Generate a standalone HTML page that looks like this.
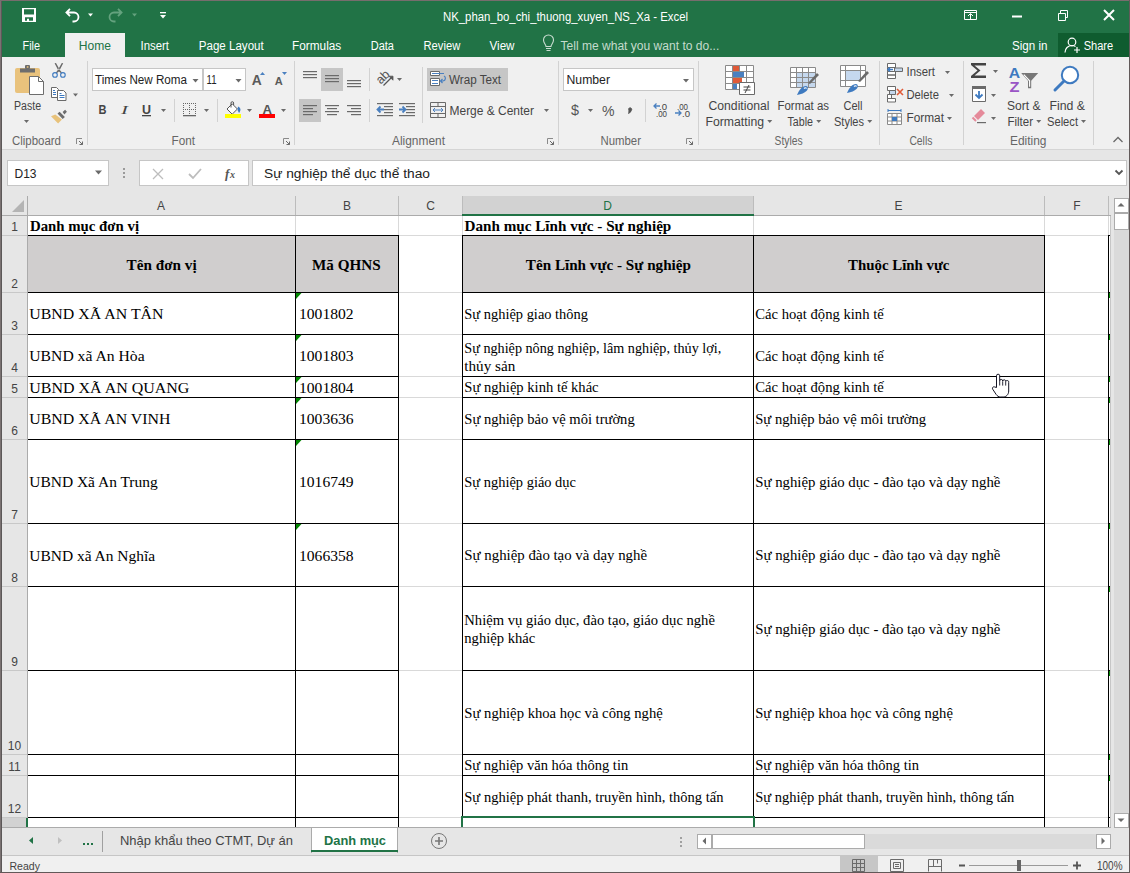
<!DOCTYPE html>
<html><head><meta charset="utf-8"><title>Excel</title>
<style>html,body{margin:0;padding:0;width:1130px;height:873px;overflow:hidden;background:#f0f0f0;font-family:"Liberation Sans",sans-serif}
svg{display:block;position:absolute;left:0;top:0}</style></head>
<body><svg width="1130" height="873" viewBox="0 0 1130 873" shape-rendering="auto">
<rect x="0" y="0" width="1130" height="873" fill="#f0f0f0" />
<rect x="2" y="1" width="1127" height="56" fill="#217346" />
<rect x="65" y="33" width="60" height="24" fill="#f0f0f0" />
<rect x="1058" y="33" width="71" height="24" fill="#0f5c2f" />
<rect x="2" y="57" width="1127" height="92" fill="#f0f0f0" />
<rect x="2" y="149" width="1127" height="1" fill="#d5d5d5" />
<rect x="2" y="150" width="1127" height="46" fill="#e6e6e6" />
<rect x="0" y="0" width="1" height="873" fill="#7a7272" />
<rect x="1" y="0" width="1" height="873" fill="#5c5858" />
<rect x="0" y="0" width="1130" height="1" fill="#776d6d" />
<rect x="1129" y="0" width="1" height="873" fill="#625a5a" />
<rect x="0" y="872" width="1130" height="1" fill="#625858" />
<path d="M22 8h14v14h-14z M24 9.2v5.4h10v-5.4z M25 17.2v3.6h2v-2h2v2h4v-3.6z" fill="#fff" fill-rule="evenodd"/>
<path d="M66.5 12.5h7.5a4.5 4.5 0 0 1 0 9h-1.5 M70 8.8l-3.6 3.7 3.6 3.7" stroke="#fff" stroke-width="1.8" fill="none"/>
<path d="M88.0 13.5h5l-2.5 3.0z" fill="#fff"/>
<path d="M121.5 12.5h-7.5a4.5 4.5 0 0 0 0 9h1.5 M118 8.8l3.6 3.7 -3.6 3.7" stroke="#64a27e" stroke-width="1.8" fill="none"/>
<path d="M132.0 13.5h5l-2.5 3.0z" fill="#64a27e"/>
<rect x="160" y="12" width="6" height="1.3" fill="#fff" />
<path d="M160.0 15h6l-3.0 3.5z" fill="#fff"/>
<text x="443" y="21" font-family="Liberation Sans" font-size="12" fill="#fff" font-weight="normal" textLength="245" lengthAdjust="spacingAndGlyphs" >NK_phan_bo_chi_thuong_xuyen_NS_Xa - Excel</text>
<path d="M964.5 10.5h12v9h-12z M964.5 12.5h12" stroke="#fff" stroke-width="1" fill="none"/>
<path d="M970.5 19v-5 M968 16l2.5-2.5 2.5 2.5" stroke="#fff" stroke-width="1" fill="none"/>
<rect x="1012" y="15.5" width="10" height="2" fill="#fff" />
<path d="M1058.5 13.5h7v7h-7z M1060.5 13.5v-3h7v7h-2" stroke="#fff" stroke-width="1" fill="none"/>
<path d="M1104 10l10 10 M1114 10l-10 10" stroke="#fff" stroke-width="2" fill="none"/>
<text x="22.5" y="50" font-family="Liberation Sans" font-size="12" fill="#fff" font-weight="normal" textLength="17.5" lengthAdjust="spacingAndGlyphs" >File</text>
<text x="140.5" y="50" font-family="Liberation Sans" font-size="12" fill="#fff" font-weight="normal" textLength="28.5" lengthAdjust="spacingAndGlyphs" >Insert</text>
<text x="198.75" y="50" font-family="Liberation Sans" font-size="12" fill="#fff" font-weight="normal" textLength="65" lengthAdjust="spacingAndGlyphs" >Page Layout</text>
<text x="292" y="50" font-family="Liberation Sans" font-size="12" fill="#fff" font-weight="normal" textLength="49.25" lengthAdjust="spacingAndGlyphs" >Formulas</text>
<text x="370.75" y="50" font-family="Liberation Sans" font-size="12" fill="#fff" font-weight="normal" textLength="23.25" lengthAdjust="spacingAndGlyphs" >Data</text>
<text x="423.5" y="50" font-family="Liberation Sans" font-size="12" fill="#fff" font-weight="normal" textLength="36.75" lengthAdjust="spacingAndGlyphs" >Review</text>
<text x="489.5" y="50" font-family="Liberation Sans" font-size="12" fill="#fff" font-weight="normal" textLength="25" lengthAdjust="spacingAndGlyphs" >View</text>
<text x="78.75" y="50" font-family="Liberation Sans" font-size="12" fill="#217346" font-weight="normal" textLength="32.25" lengthAdjust="spacingAndGlyphs" >Home</text>
<path d="M546 46.5c0-2-2.5-3.5-2.5-6.5a5 5 0 0 1 10 0c0 3-2.5 4.5-2.5 6.5z M546 48.5h5 M546.5 50.5h4" stroke="#c9ddd1" stroke-width="1.1" fill="none"/>
<text x="560.5" y="50" font-family="Liberation Sans" font-size="12" fill="#c5dccd" font-weight="normal" textLength="158.75" lengthAdjust="spacingAndGlyphs" >Tell me what you want to do...</text>
<text x="1012" y="50" font-family="Liberation Sans" font-size="12" fill="#fff" font-weight="normal" textLength="35.5" lengthAdjust="spacingAndGlyphs" >Sign in</text>
<path d="M1072 45.5a4 4 0 1 0 0.01 0z" fill="none"/>
<circle cx="1072" cy="42" r="3.8" stroke="#fff" stroke-width="1.2" fill="none"/><path d="M1065 52.5c0-4 3-7 7-7 1.5 0 2.5 0.3 3.5 1" stroke="#fff" stroke-width="1.2" fill="none"/><path d="M1077 47v6 M1074 50h6" stroke="#fff" stroke-width="1.2"/>
<text x="1083.7" y="50" font-family="Liberation Sans" font-size="12" fill="#fff" font-weight="normal" textLength="29.5" lengthAdjust="spacingAndGlyphs" >Share</text>
<rect x="87" y="61" width="1" height="84" fill="#d2d2d2" />
<rect x="294" y="61" width="1" height="84" fill="#d2d2d2" />
<rect x="558" y="61" width="1" height="84" fill="#d2d2d2" />
<rect x="698" y="61" width="1" height="84" fill="#d2d2d2" />
<rect x="879" y="61" width="1" height="84" fill="#d2d2d2" />
<rect x="963" y="61" width="1" height="84" fill="#d2d2d2" />
<rect x="1093" y="61" width="1" height="84" fill="#d2d2d2" />
<path d="M76.5 144v-5.5h5.5" stroke="#8a8a8a" stroke-width="1" fill="none"/><path d="M79 141l3.5 3.5 M82.5 141.5v3h-3" stroke="#6a6a6a" stroke-width="1" fill="none"/>
<path d="M283.5 144v-5.5h5.5" stroke="#8a8a8a" stroke-width="1" fill="none"/><path d="M286 141l3.5 3.5 M289.5 141.5v3h-3" stroke="#6a6a6a" stroke-width="1" fill="none"/>
<path d="M547.5 144v-5.5h5.5" stroke="#8a8a8a" stroke-width="1" fill="none"/><path d="M550 141l3.5 3.5 M553.5 141.5v3h-3" stroke="#6a6a6a" stroke-width="1" fill="none"/>
<path d="M686.5 144v-5.5h5.5" stroke="#8a8a8a" stroke-width="1" fill="none"/><path d="M689 141l3.5 3.5 M692.5 141.5v3h-3" stroke="#6a6a6a" stroke-width="1" fill="none"/>
<text x="12" y="145" font-family="Liberation Sans" font-size="12" fill="#666666" font-weight="normal" textLength="49" lengthAdjust="spacingAndGlyphs" >Clipboard</text>
<text x="171.5" y="145" font-family="Liberation Sans" font-size="12" fill="#666666" font-weight="normal" textLength="23.5" lengthAdjust="spacingAndGlyphs" >Font</text>
<text x="392" y="145" font-family="Liberation Sans" font-size="12" fill="#666666" font-weight="normal" textLength="53" lengthAdjust="spacingAndGlyphs" >Alignment</text>
<text x="600.5" y="145" font-family="Liberation Sans" font-size="12" fill="#666666" font-weight="normal" textLength="40.5" lengthAdjust="spacingAndGlyphs" >Number</text>
<text x="774.6" y="145" font-family="Liberation Sans" font-size="12" fill="#666666" font-weight="normal" textLength="28" lengthAdjust="spacingAndGlyphs" >Styles</text>
<text x="909.4" y="145" font-family="Liberation Sans" font-size="12" fill="#666666" font-weight="normal" textLength="23" lengthAdjust="spacingAndGlyphs" >Cells</text>
<text x="1010" y="145" font-family="Liberation Sans" font-size="12" fill="#666666" font-weight="normal" textLength="36.5" lengthAdjust="spacingAndGlyphs" >Editing</text>
<path d="M1113.5 142l4.5-4.5 4.5 4.5" stroke="#6a6a6a" stroke-width="1.3" fill="none"/>
<rect x="15" y="68" width="25" height="25" rx="2" fill="#e9c27c"/>
<rect x="20" y="68.5" width="15" height="4" fill="#6d6d6d"/><rect x="25" y="65" width="5" height="4" rx="1" fill="#6d6d6d"/><rect x="26.8" y="66.2" width="1.6" height="1.6" fill="#e9c27c"/>
<path d="M29.5 76.5h9l5 5v13h-14z" fill="#fff" stroke="#6d6d6d" stroke-width="1"/><path d="M38.5 76.5v5h5" fill="none" stroke="#6d6d6d" stroke-width="1"/>
<text x="14" y="110" font-family="Liberation Sans" font-size="12" fill="#444444" font-weight="normal" textLength="27" lengthAdjust="spacingAndGlyphs" >Paste</text>
<path d="M24.0 120h5l-2.5 3.0z" fill="#6a6a6a"/>
<path d="M54.6 63.2L56 63l4.2 7.5-1 1.8z M63.2 63.2L61.8 63l-4.2 7.5 1 1.8z" fill="#6a6a6a"/><path d="M58.9 70l-2.6 3 M58.9 70l2.6 3" stroke="#6a6a6a" stroke-width="1.2"/><circle cx="55" cy="74.9" r="2.3" stroke="#3e7ac0" stroke-width="1.1" fill="none"/><circle cx="62.9" cy="74.9" r="2.3" stroke="#3e7ac0" stroke-width="1.1" fill="none"/>
<path d="M51.5 87.5h5l2 2v8h-7z" fill="#fff" stroke="#6a6a6a"/><path d="M53 90.5h2 M53 92.5h3 M53 94.5h3" stroke="#3e7ac0" stroke-width="1"/><path d="M57.5 90.5h6l2.5 2.5v7.5h-8.5z" fill="#fff" stroke="#6a6a6a"/><path d="M59.5 93.5h2 M59.5 95.5h5 M59.5 97.5h5" stroke="#3e7ac0" stroke-width="1"/>
<path d="M73.0 93.5h5l-2.5 3.0z" fill="#6a6a6a"/>
<path d="M62.6 112L65.1 109.8L66.9 111.8L64.4 114.6Z M57.5 113.6L59.6 111.8L64.9 117L62.7 119Z" fill="#6d6d6d"/><path d="M51 116.3L55.3 114.6L61.9 119.6L58.1 123.6Z" fill="#e8c27a"/>
<rect x="92" y="68" width="111" height="23" fill="#fff" />
<rect x="92" y="68" width="111" height="1" fill="#c6c6c6" />
<rect x="92" y="90" width="111" height="1" fill="#c6c6c6" />
<rect x="92" y="68" width="1" height="23" fill="#c6c6c6" />
<rect x="202" y="68" width="1" height="23" fill="#c6c6c6" />
<rect x="203" y="68" width="43" height="23" fill="#fff" />
<rect x="203" y="68" width="43" height="1" fill="#c6c6c6" />
<rect x="203" y="90" width="43" height="1" fill="#c6c6c6" />
<rect x="203" y="68" width="1" height="23" fill="#c6c6c6" />
<rect x="245" y="68" width="1" height="23" fill="#c6c6c6" />
<text x="95" y="84" font-family="Liberation Sans" font-size="12" fill="#222" font-weight="normal" textLength="92" lengthAdjust="spacingAndGlyphs" >Times New Roma</text>
<path d="M192.5 79h6l-3.0 3.5z" fill="#6a6a6a"/>
<text x="206.5" y="84" font-family="Liberation Sans" font-size="12" fill="#222" font-weight="normal" textLength="10" lengthAdjust="spacingAndGlyphs" >11</text>
<path d="M235.5 79h6l-3.0 3.5z" fill="#6a6a6a"/>
<text x="251.8" y="85" font-family="Liberation Sans" font-size="14" fill="#5a5a5a" font-weight="bold" textLength="10" lengthAdjust="spacingAndGlyphs" >A</text>
<path d="M260 75l2.5-3 2.5 3z" fill="#4a80c0"/>
<text x="274.8" y="85" font-family="Liberation Sans" font-size="11" fill="#5a5a5a" font-weight="bold" textLength="8" lengthAdjust="spacingAndGlyphs" >A</text>
<path d="M282 72h5l-2.5 3z" fill="#4a80c0"/>
<text x="98.5" y="114" font-family="Liberation Sans" font-size="12.5" fill="#444" font-weight="bold" textLength="8" lengthAdjust="spacingAndGlyphs" >B</text>
<text x="121" y="114" font-family="Liberation Serif" font-size="13" fill="#444" font-weight="normal" textLength="7" lengthAdjust="spacingAndGlyphs" font-style="italic">I</text>
<text x="142" y="114" font-family="Liberation Sans" font-size="12.5" fill="#444" font-weight="bold" textLength="9" lengthAdjust="spacingAndGlyphs" >U</text>
<rect x="142" y="115" width="9" height="1.3" fill="#444" />
<path d="M161.0 109h5l-2.5 3.0z" fill="#6a6a6a"/>
<rect x="174" y="99" width="1" height="23" fill="#d2d2d2" />
<rect x="183" y="103" width="1" height="1" fill="#666" />
<rect x="185" y="103" width="1" height="1" fill="#666" />
<rect x="187" y="103" width="1" height="1" fill="#666" />
<rect x="189" y="103" width="1" height="1" fill="#666" />
<rect x="191" y="103" width="1" height="1" fill="#666" />
<rect x="193" y="103" width="1" height="1" fill="#666" />
<rect x="195" y="103" width="1" height="1" fill="#666" />
<rect x="183" y="109" width="1" height="1" fill="#666" />
<rect x="185" y="109" width="1" height="1" fill="#666" />
<rect x="187" y="109" width="1" height="1" fill="#666" />
<rect x="189" y="109" width="1" height="1" fill="#666" />
<rect x="191" y="109" width="1" height="1" fill="#666" />
<rect x="193" y="109" width="1" height="1" fill="#666" />
<rect x="195" y="109" width="1" height="1" fill="#666" />
<rect x="183" y="105" width="1" height="1" fill="#666" />
<rect x="189" y="105" width="1" height="1" fill="#666" />
<rect x="195" y="105" width="1" height="1" fill="#666" />
<rect x="183" y="107" width="1" height="1" fill="#666" />
<rect x="189" y="107" width="1" height="1" fill="#666" />
<rect x="195" y="107" width="1" height="1" fill="#666" />
<rect x="183" y="111" width="1" height="1" fill="#666" />
<rect x="189" y="111" width="1" height="1" fill="#666" />
<rect x="195" y="111" width="1" height="1" fill="#666" />
<rect x="183" y="113" width="1" height="1" fill="#666" />
<rect x="189" y="113" width="1" height="1" fill="#666" />
<rect x="195" y="113" width="1" height="1" fill="#666" />
<rect x="183" y="115" width="13" height="1.3" fill="#666" />
<path d="M204.0 109h5l-2.5 3.0z" fill="#6a6a6a"/>
<rect x="217" y="99" width="1" height="23" fill="#d2d2d2" />
<path d="M227 109l5.2-5.2 5.2 5.2-5.2 5.2z" fill="#fff" stroke="#555" stroke-width="1"/><path d="M231 107.5v-4.5a1.3 1.3 0 0 1 2.6 0v2" stroke="#555" stroke-width="1" fill="none"/><path d="M238 106.5c2.5 1 3.5 3.5 1 6.5l-1.5-3z" fill="#3e7ac0"/>
<rect x="225" y="114" width="16" height="4" fill="#ffff00" />
<path d="M247.0 109h5l-2.5 3.0z" fill="#6a6a6a"/>
<text x="262.5" y="113.5" font-family="Liberation Sans" font-size="12.5" fill="#555" font-weight="bold" textLength="9.5" lengthAdjust="spacingAndGlyphs" >A</text>
<rect x="259" y="114" width="16" height="4" fill="#ff0000" />
<path d="M281.0 109h5l-2.5 3.0z" fill="#6a6a6a"/>
<rect x="321" y="68" width="22" height="23" fill="#c6c6c6" />
<rect x="299" y="99" width="22" height="23" fill="#c6c6c6" />
<rect x="303" y="71" width="14" height="1.2" fill="#6a6a6a" />
<rect x="303" y="74" width="14" height="1.2" fill="#6a6a6a" />
<rect x="303" y="77" width="14" height="1.2" fill="#6a6a6a" />
<rect x="325" y="75" width="14" height="1.2" fill="#6a6a6a" />
<rect x="325" y="78" width="14" height="1.2" fill="#6a6a6a" />
<rect x="325" y="81" width="14" height="1.2" fill="#6a6a6a" />
<rect x="347" y="80" width="14" height="1.2" fill="#6a6a6a" />
<rect x="347" y="83" width="14" height="1.2" fill="#6a6a6a" />
<rect x="347" y="86" width="14" height="1.2" fill="#6a6a6a" />
<rect x="303" y="105" width="14" height="1.2" fill="#6a6a6a" />
<rect x="325" y="105" width="14" height="1.2" fill="#6a6a6a" />
<rect x="347" y="105" width="14" height="1.2" fill="#6a6a6a" />
<rect x="303" y="108" width="10" height="1.2" fill="#6a6a6a" />
<rect x="327" y="108" width="10" height="1.2" fill="#6a6a6a" />
<rect x="351" y="108" width="10" height="1.2" fill="#6a6a6a" />
<rect x="303" y="111" width="14" height="1.2" fill="#6a6a6a" />
<rect x="325" y="111" width="14" height="1.2" fill="#6a6a6a" />
<rect x="347" y="111" width="14" height="1.2" fill="#6a6a6a" />
<rect x="303" y="114" width="10" height="1.2" fill="#6a6a6a" />
<rect x="327" y="114" width="10" height="1.2" fill="#6a6a6a" />
<rect x="351" y="114" width="10" height="1.2" fill="#6a6a6a" />
<rect x="369" y="68" width="1" height="23" fill="#d2d2d2" />
<rect x="369" y="99" width="1" height="23" fill="#d2d2d2" />
<text x="0" y="0" font-family="Liberation Sans" font-size="12.5" fill="#555" transform="translate(380.7 84.8) rotate(-45)">ab</text>
<path d="M383.5 85.5l7.5-7.5" stroke="#555" stroke-width="1.2" fill="none"/><path d="M389 76.2h4v4z" fill="#555" stroke="#555" stroke-width="0.8"/>
<path d="M397.0 78h5l-2.5 3.0z" fill="#6a6a6a"/>
<rect x="377" y="103" width="16" height="1.2" fill="#6a6a6a" />
<rect x="377" y="115" width="16" height="1.2" fill="#6a6a6a" />
<rect x="384" y="106" width="9" height="1.2" fill="#6a6a6a" />
<rect x="384" y="109" width="9" height="1.2" fill="#6a6a6a" />
<rect x="384" y="112" width="9" height="1.2" fill="#6a6a6a" />
<path d="M384 109.5h-6 M380.5 106.5l-3 3 3 3" stroke="#4a80c0" stroke-width="1.8" fill="none"/>
<rect x="399" y="103" width="16" height="1.2" fill="#6a6a6a" />
<rect x="399" y="115" width="16" height="1.2" fill="#6a6a6a" />
<rect x="406" y="106" width="9" height="1.2" fill="#6a6a6a" />
<rect x="406" y="109" width="9" height="1.2" fill="#6a6a6a" />
<rect x="406" y="112" width="9" height="1.2" fill="#6a6a6a" />
<path d="M399 109.5h6 M402.5 106.5l3 3 -3 3" stroke="#4a80c0" stroke-width="1.8" fill="none"/>
<rect x="422" y="67" width="1" height="56" fill="#d2d2d2" />
<rect x="427" y="68" width="81" height="23" fill="#c6c6c6" />
<path d="M430.5 71.5h9v4h-9z M430.5 78.5h9v7h-9z" fill="#fff" stroke="#6a6a6a"/><path d="M432 73.5h12 M432 80.5h6 M432 83.5h6" stroke="#4a80c0" stroke-width="1"/><path d="M444 76c2 1 2 4.5 -1 5h-2 M442.5 79l-2 2 2 2" stroke="#4a80c0" stroke-width="1.2" fill="none"/>
<text x="449" y="84" font-family="Liberation Sans" font-size="12" fill="#444444" font-weight="normal" textLength="52" lengthAdjust="spacingAndGlyphs" >Wrap Text</text>
<path d="M430.5 102.5h15v15h-15z M430.5 106.5h15 M430.5 113.5h15 M438 102.5v4 M438 113.5v4" fill="none" stroke="#6a6a6a"/><path d="M433 110h10 M435 108l-2 2 2 2 M441 108l2 2-2 2" stroke="#4a80c0" stroke-width="1" fill="none"/>
<text x="449.5" y="115" font-family="Liberation Sans" font-size="12" fill="#444444" font-weight="normal" textLength="84.5" lengthAdjust="spacingAndGlyphs" >Merge &amp; Center</text>
<path d="M544.0 109h5l-2.5 3.0z" fill="#6a6a6a"/>
<rect x="563" y="68" width="131" height="23" fill="#fff" />
<rect x="563" y="68" width="131" height="1" fill="#c6c6c6" />
<rect x="563" y="90" width="131" height="1" fill="#c6c6c6" />
<rect x="563" y="68" width="1" height="23" fill="#c6c6c6" />
<rect x="693" y="68" width="1" height="23" fill="#c6c6c6" />
<text x="566.5" y="84" font-family="Liberation Sans" font-size="12" fill="#222" font-weight="normal" textLength="43.5" lengthAdjust="spacingAndGlyphs" >Number</text>
<path d="M683.0 79h6l-3.0 3.5z" fill="#6a6a6a"/>
<text x="571" y="115" font-family="Liberation Sans" font-size="15" fill="#555" font-weight="normal" textLength="8" lengthAdjust="spacingAndGlyphs" >$</text>
<path d="M588.0 109h5l-2.5 3.0z" fill="#6a6a6a"/>
<text x="602" y="116" font-family="Liberation Sans" font-size="14" fill="#555" font-weight="normal" textLength="12.5" lengthAdjust="spacingAndGlyphs" >%</text>
<path d="M628.5 109.5a1.6 1.6 0 1 1 2.8 1c-0.5 1.5-1.5 2.5-3 3" fill="#555" stroke="#555" stroke-width="1"/>
<rect x="645" y="99" width="1" height="23" fill="#d2d2d2" />
<text x="659" y="109.5" font-family="Liberation Sans" font-size="9" fill="#444" font-weight="normal" textLength="8" lengthAdjust="spacingAndGlyphs" >.0</text>
<text x="656" y="116.5" font-family="Liberation Sans" font-size="9" fill="#444" font-weight="normal" textLength="11" lengthAdjust="spacingAndGlyphs" >.00</text>
<path d="M660 106h-6 M656.5 103.5l-2.5 2.5 2.5 2.5" stroke="#4a80c0" stroke-width="1.3" fill="none"/>
<text x="677" y="109.5" font-family="Liberation Sans" font-size="9" fill="#444" font-weight="normal" textLength="11" lengthAdjust="spacingAndGlyphs" >.00</text>
<text x="682" y="116.5" font-family="Liberation Sans" font-size="9" fill="#444" font-weight="normal" textLength="8" lengthAdjust="spacingAndGlyphs" >.0</text>
<path d="M675 113h6 M678.5 110.5l2.5 2.5-2.5 2.5" stroke="#4a80c0" stroke-width="1.3" fill="none"/>
<path d="M725.5 65.5h28v24h-28z M732.5 65.5v24 M739.5 65.5v24 M746.5 65.5v24 M725.5 71.5h28 M725.5 77.5h28 M725.5 83.5h28" stroke="#8a8a8a" stroke-width="1" fill="#fff"/>
<rect x="733" y="66" width="6" height="5" fill="#e05a38" />
<rect x="733" y="72" width="11" height="5" fill="#4a80c0" />
<rect x="733" y="78" width="9" height="5" fill="#e05a38" />
<rect x="733" y="84" width="4" height="5" fill="#4a80c0" />
<path d="M739.5 82.5h15v12h-15z" fill="#fff" stroke="#6a6a6a"/>
<path d="M743.5 87h7 M743.5 90h7 M745 93l4-8" stroke="#444" stroke-width="1"/>
<text x="708.5" y="110" font-family="Liberation Sans" font-size="12" fill="#444444" font-weight="normal" textLength="61" lengthAdjust="spacingAndGlyphs" >Conditional</text>
<text x="705.5" y="126" font-family="Liberation Sans" font-size="12" fill="#444444" font-weight="normal" textLength="58.5" lengthAdjust="spacingAndGlyphs" >Formatting</text>
<path d="M767.25 120h5l-2.5 3.0z" fill="#6a6a6a"/>
<path d="M790.5 67.5h25v20h-25z" fill="#fff" stroke="#8a8a8a"/>
<rect x="797" y="73" width="18" height="14" fill="#c5d8ee" />
<path d="M796.5 67.5v20 M802.5 67.5v20 M808.5 67.5v20 M790.5 72.5h25 M790.5 77.5h25 M790.5 82.5h25" stroke="#8a8a8a" stroke-width="1"/>
<path d="M808 83l9-10 2 2-9 9z" fill="#6a6a6a"/><path d="M797 95c2-5 5-9 9-9c2 0 2.5 3 0.5 5c-2 2-5 3-9.5 4z" fill="#3e7ac0"/><path d="M804 88.5c1-1 2-1 2.5 0" stroke="#fff" stroke-width="1.2" fill="none"/>
<text x="777.5" y="110" font-family="Liberation Sans" font-size="12" fill="#444444" font-weight="normal" textLength="51.5" lengthAdjust="spacingAndGlyphs" >Format as</text>
<text x="787.5" y="126" font-family="Liberation Sans" font-size="12" fill="#444444" font-weight="normal" textLength="25.5" lengthAdjust="spacingAndGlyphs" >Table</text>
<path d="M816.25 120h5l-2.5 3.0z" fill="#6a6a6a"/>
<path d="M840.5 65.5h25v21h-25z" fill="#fff" stroke="#8a8a8a"/>
<rect x="846" y="71" width="14" height="9" fill="#c5d8ee" />
<path d="M845.5 65.5v21 M860.5 65.5v15 M840.5 70.5h25 M840.5 80.5h20" stroke="#8a8a8a" stroke-width="1"/>
<path d="M858 81l9-10 2 2-9 9z" fill="#6a6a6a"/><path d="M847 93c2-5 5-9 9-9c2 0 2.5 3 0.5 5c-2 2-5 3-9.5 4z" fill="#3e7ac0"/><path d="M854 86.5c1-1 2-1 2.5 0" stroke="#fff" stroke-width="1.2" fill="none"/>
<text x="843.5" y="110" font-family="Liberation Sans" font-size="12" fill="#444444" font-weight="normal" textLength="19" lengthAdjust="spacingAndGlyphs" >Cell</text>
<text x="834" y="126" font-family="Liberation Sans" font-size="12" fill="#444444" font-weight="normal" textLength="30" lengthAdjust="spacingAndGlyphs" >Styles</text>
<path d="M867.25 120h5l-2.5 3.0z" fill="#6a6a6a"/>
<path d="M887.5 63.5h8v4h-8z M887.5 67.5h8v4h-8z M887.5 71.5h8v3.5h-8z M887.5 75h8v3.5h-8z" fill="#fff" stroke="#6a6a6a"/>
<path d="M894.5 68h8v3.5h-8z" fill="#c5d8ee" stroke="#6a6a6a"/>
<path d="M893 69.5h-5 M890 67.5l-2 2 2 2" stroke="#3e7ac0" stroke-width="1.5" fill="none"/>
<text x="906.5" y="76" font-family="Liberation Sans" font-size="12" fill="#444444" font-weight="normal" textLength="28.5" lengthAdjust="spacingAndGlyphs" >Insert</text>
<path d="M945.0 71h5l-2.5 3.0z" fill="#6a6a6a"/>
<path d="M887.5 86.5h8v4h-8z M887.5 94.5h4v4h-4z M887.5 98.5h8v3.5h-8z" fill="#fff" stroke="#6a6a6a"/><path d="M889.5 90.5h6v4h-6z" fill="#c5d8ee" stroke="#6a6a6a"/>
<path d="M897 89l6 6 M903 89l-6 6" stroke="#e05a38" stroke-width="1.6"/>
<text x="906.5" y="99" font-family="Liberation Sans" font-size="12" fill="#444444" font-weight="normal" textLength="32.5" lengthAdjust="spacingAndGlyphs" >Delete</text>
<path d="M949.0 94h5l-2.5 3.0z" fill="#6a6a6a"/>
<path d="M887.5 113.5h14v11h-14z M887.5 117h14 M887.5 121h14 M892 113.5v11 M897 113.5v11" fill="#fff" stroke="#8a8a8a"/>
<rect x="892" y="117" width="5" height="4" fill="#3e7ac0" />
<path d="M888 110.5h13 M888 109v3 M901 109v3" stroke="#3e7ac0" stroke-width="1"/>
<text x="906.5" y="122" font-family="Liberation Sans" font-size="12" fill="#444444" font-weight="normal" textLength="37.5" lengthAdjust="spacingAndGlyphs" >Format</text>
<path d="M947.0 117h5l-2.5 3.0z" fill="#6a6a6a"/>
<path d="M971 63h15v2.5h-11.5l6 5-6 5h11.5v2.5h-15v-2l6.5-5.5-6.5-5.5z" fill="#444"/>
<path d="M993.0 70h5l-2.5 3.0z" fill="#6a6a6a"/>
<path d="M972.5 86.5h13v15h-13z" fill="#fff" stroke="#6a6a6a"/>
<rect x="972" y="86" width="14" height="3" fill="#6a6a6a" />
<path d="M979 91v7 M975.5 94.5l3.5 3.5 3.5-3.5" stroke="#3e7ac0" stroke-width="1.8" fill="none"/>
<path d="M991.0 94h5l-2.5 3.0z" fill="#6a6a6a"/>
<path d="M974 116l7-7 4 4-7 7z" fill="#e58a9a"/><path d="M972.5 117.5l3.5 3.5" stroke="#e58a9a" stroke-width="2"/>
<rect x="977" y="122" width="9" height="1.2" fill="#6a6a6a" />
<path d="M991.0 117h5l-2.5 3.0z" fill="#6a6a6a"/>
<text x="1008.8" y="77.8" font-family="Liberation Sans" font-size="15.5" fill="#3e7ac0" font-weight="bold" textLength="11.4" lengthAdjust="spacingAndGlyphs" >A</text>
<text x="1009.6" y="92" font-family="Liberation Sans" font-size="15.5" fill="#9a55c5" font-weight="bold" textLength="10" lengthAdjust="spacingAndGlyphs" >Z</text>
<path d="M1021.2 73H1038.2L1031.2 80.8V88.2H1028V80.8Z" fill="#777"/><path d="M1023.8 74.6L1029.6 80.8V86.8" stroke="#fff" stroke-width="1.1" fill="none"/>
<text x="1007" y="110" font-family="Liberation Sans" font-size="12" fill="#444444" font-weight="normal" textLength="33.5" lengthAdjust="spacingAndGlyphs" >Sort &amp;</text>
<text x="1007.5" y="126" font-family="Liberation Sans" font-size="12" fill="#444444" font-weight="normal" textLength="25.5" lengthAdjust="spacingAndGlyphs" >Filter</text>
<path d="M1036.25 120h5l-2.5 3.0z" fill="#6a6a6a"/>
<circle cx="1070" cy="75" r="8.2" stroke="#3e7ac0" stroke-width="2" fill="#fff"/><path d="M1064 81l-9 9" stroke="#3e7ac0" stroke-width="3" stroke-linecap="round"/>
<text x="1049.5" y="110" font-family="Liberation Sans" font-size="12" fill="#444444" font-weight="normal" textLength="35.5" lengthAdjust="spacingAndGlyphs" >Find &amp;</text>
<text x="1047" y="126" font-family="Liberation Sans" font-size="12" fill="#444444" font-weight="normal" textLength="31" lengthAdjust="spacingAndGlyphs" >Select</text>
<path d="M1081.0 120h5l-2.5 3.0z" fill="#6a6a6a"/>
<rect x="7" y="160" width="102" height="26" fill="#fff" />
<rect x="7" y="160" width="102" height="1" fill="#c6c6c6" />
<rect x="7" y="185" width="102" height="1" fill="#c6c6c6" />
<rect x="7" y="160" width="1" height="26" fill="#c6c6c6" />
<rect x="108" y="160" width="1" height="26" fill="#c6c6c6" />
<text x="14.5" y="178" font-family="Liberation Sans" font-size="12" fill="#222" font-weight="normal" textLength="22" lengthAdjust="spacingAndGlyphs" >D13</text>
<path d="M95.0 170.5h7l-3.5 4.0z" fill="#6a6a6a"/>
<rect x="123" y="168" width="2" height="2" fill="#9a9a9a" />
<rect x="123" y="172" width="2" height="2" fill="#9a9a9a" />
<rect x="123" y="176" width="2" height="2" fill="#9a9a9a" />
<rect x="139" y="160" width="110" height="26" fill="#fff" />
<rect x="139" y="160" width="110" height="1" fill="#c6c6c6" />
<rect x="139" y="185" width="110" height="1" fill="#c6c6c6" />
<rect x="139" y="160" width="1" height="26" fill="#c6c6c6" />
<rect x="248" y="160" width="1" height="26" fill="#c6c6c6" />
<path d="M153 169l10 10 M163 169l-10 10" stroke="#bdbdbd" stroke-width="1.3"/>
<path d="M189 174l4 4 8-9" stroke="#bdbdbd" stroke-width="1.8" fill="none"/>
<text x="225" y="178" font-family="Liberation Serif" font-size="13" fill="#555" font-weight="bold" font-style="italic">f</text>
<text x="230" y="178" font-family="Liberation Serif" font-size="10" fill="#555" font-weight="bold" font-style="italic">x</text>
<rect x="252" y="160" width="875" height="26" fill="#fff" />
<rect x="252" y="160" width="875" height="1" fill="#c6c6c6" />
<rect x="252" y="185" width="875" height="1" fill="#c6c6c6" />
<rect x="252" y="160" width="1" height="26" fill="#c6c6c6" />
<rect x="1126" y="160" width="1" height="26" fill="#c6c6c6" />
<text x="264" y="178" font-family="Liberation Sans" font-size="12" fill="#222" font-weight="normal" textLength="166" lengthAdjust="spacingAndGlyphs" >Sự nghiệp thể dục thể thao</text>
<path d="M1115.5 170.5l3.5 3.5 3.5-3.5" stroke="#555" stroke-width="1.8" fill="none"/>
<rect x="2" y="196" width="1109" height="19" fill="#e6e6e6" />
<path d="M24 200v12h-12z" fill="#b4b4b4"/>
<rect x="463" y="196" width="290" height="18" fill="#d2d2d2" />
<rect x="27" y="196" width="1" height="19" fill="#bcbcbc" />
<rect x="295" y="196" width="1" height="19" fill="#bcbcbc" />
<rect x="398" y="196" width="1" height="19" fill="#bcbcbc" />
<rect x="462" y="196" width="1" height="19" fill="#bcbcbc" />
<rect x="753" y="196" width="1" height="19" fill="#bcbcbc" />
<rect x="1044" y="196" width="1" height="19" fill="#bcbcbc" />
<rect x="1108" y="196" width="1" height="19" fill="#bcbcbc" />
<rect x="2" y="215" width="1109" height="1" fill="#ababab" />
<rect x="462" y="214" width="292" height="2" fill="#217346" />
<text x="161" y="210" font-family="Liberation Sans" font-size="12" fill="#444" font-weight="normal" text-anchor="middle" >A</text>
<text x="347" y="210" font-family="Liberation Sans" font-size="12" fill="#444" font-weight="normal" text-anchor="middle" >B</text>
<text x="430.5" y="210" font-family="Liberation Sans" font-size="12" fill="#444" font-weight="normal" text-anchor="middle" >C</text>
<text x="607.5" y="210" font-family="Liberation Sans" font-size="12" fill="#217346" font-weight="normal" text-anchor="middle" >D</text>
<text x="898.5" y="210" font-family="Liberation Sans" font-size="12" fill="#444" font-weight="normal" text-anchor="middle" >E</text>
<text x="1077" y="210" font-family="Liberation Sans" font-size="12" fill="#444" font-weight="normal" text-anchor="middle" >F</text>
<rect x="2" y="216" width="25" height="611" fill="#e6e6e6" />
<rect x="27" y="196" width="1" height="632" fill="#ababab" />
<rect x="2" y="235" width="25" height="1" fill="#c8c8c8" />
<rect x="2" y="292" width="25" height="1" fill="#c8c8c8" />
<rect x="2" y="334" width="25" height="1" fill="#c8c8c8" />
<rect x="2" y="376" width="25" height="1" fill="#c8c8c8" />
<rect x="2" y="397" width="25" height="1" fill="#c8c8c8" />
<rect x="2" y="439" width="25" height="1" fill="#c8c8c8" />
<rect x="2" y="523" width="25" height="1" fill="#c8c8c8" />
<rect x="2" y="586" width="25" height="1" fill="#c8c8c8" />
<rect x="2" y="670" width="25" height="1" fill="#c8c8c8" />
<rect x="2" y="754" width="25" height="1" fill="#c8c8c8" />
<rect x="2" y="775" width="25" height="1" fill="#c8c8c8" />
<rect x="2" y="817" width="25" height="1" fill="#c8c8c8" />
<rect x="2" y="818" width="24" height="9" fill="#d2d2d2" />
<rect x="26" y="818" width="2" height="9" fill="#217346" />
<text x="14.5" y="231" font-family="Liberation Sans" font-size="12" fill="#444" font-weight="normal" text-anchor="middle" >1</text>
<text x="14.5" y="288" font-family="Liberation Sans" font-size="12" fill="#444" font-weight="normal" text-anchor="middle" >2</text>
<text x="14.5" y="330" font-family="Liberation Sans" font-size="12" fill="#444" font-weight="normal" text-anchor="middle" >3</text>
<text x="14.5" y="372" font-family="Liberation Sans" font-size="12" fill="#444" font-weight="normal" text-anchor="middle" >4</text>
<text x="14.5" y="393" font-family="Liberation Sans" font-size="12" fill="#444" font-weight="normal" text-anchor="middle" >5</text>
<text x="14.5" y="435" font-family="Liberation Sans" font-size="12" fill="#444" font-weight="normal" text-anchor="middle" >6</text>
<text x="14.5" y="519" font-family="Liberation Sans" font-size="12" fill="#444" font-weight="normal" text-anchor="middle" >7</text>
<text x="14.5" y="582" font-family="Liberation Sans" font-size="12" fill="#444" font-weight="normal" text-anchor="middle" >8</text>
<text x="14.5" y="666" font-family="Liberation Sans" font-size="12" fill="#444" font-weight="normal" text-anchor="middle" >9</text>
<text x="14.5" y="750" font-family="Liberation Sans" font-size="12" fill="#444" font-weight="normal" text-anchor="middle" >10</text>
<text x="14.5" y="771" font-family="Liberation Sans" font-size="12" fill="#444" font-weight="normal" text-anchor="middle" >11</text>
<text x="14.5" y="813" font-family="Liberation Sans" font-size="12" fill="#444" font-weight="normal" text-anchor="middle" >12</text>
<rect x="28" y="216" width="1082" height="611" fill="#fff" />
<rect x="295" y="216" width="1" height="611" fill="#d9d9d9" />
<rect x="398" y="216" width="1" height="611" fill="#d9d9d9" />
<rect x="462" y="216" width="1" height="611" fill="#d9d9d9" />
<rect x="753" y="216" width="1" height="611" fill="#d9d9d9" />
<rect x="1044" y="216" width="1" height="611" fill="#d9d9d9" />
<rect x="1108" y="216" width="1" height="611" fill="#d9d9d9" />
<rect x="28" y="235" width="1082" height="1" fill="#d9d9d9" />
<rect x="28" y="292" width="1082" height="1" fill="#d9d9d9" />
<rect x="28" y="334" width="1082" height="1" fill="#d9d9d9" />
<rect x="28" y="376" width="1082" height="1" fill="#d9d9d9" />
<rect x="28" y="397" width="1082" height="1" fill="#d9d9d9" />
<rect x="28" y="439" width="1082" height="1" fill="#d9d9d9" />
<rect x="28" y="523" width="1082" height="1" fill="#d9d9d9" />
<rect x="28" y="586" width="1082" height="1" fill="#d9d9d9" />
<rect x="28" y="670" width="1082" height="1" fill="#d9d9d9" />
<rect x="28" y="754" width="1082" height="1" fill="#d9d9d9" />
<rect x="28" y="775" width="1082" height="1" fill="#d9d9d9" />
<rect x="28" y="817" width="1082" height="1" fill="#d9d9d9" />
<rect x="28" y="236" width="267" height="56" fill="#d0cece" />
<rect x="296" y="236" width="102" height="56" fill="#d0cece" />
<rect x="463" y="236" width="290" height="56" fill="#d0cece" />
<rect x="754" y="236" width="290" height="56" fill="#d0cece" />
<rect x="28" y="235" width="371" height="1" fill="#000" />
<rect x="462" y="235" width="583" height="1" fill="#000" />
<rect x="28" y="292" width="371" height="1" fill="#000" />
<rect x="462" y="292" width="583" height="1" fill="#000" />
<rect x="28" y="334" width="371" height="1" fill="#000" />
<rect x="462" y="334" width="583" height="1" fill="#000" />
<rect x="28" y="376" width="371" height="1" fill="#000" />
<rect x="462" y="376" width="583" height="1" fill="#000" />
<rect x="28" y="397" width="371" height="1" fill="#000" />
<rect x="462" y="397" width="583" height="1" fill="#000" />
<rect x="28" y="439" width="371" height="1" fill="#000" />
<rect x="462" y="439" width="583" height="1" fill="#000" />
<rect x="28" y="523" width="371" height="1" fill="#000" />
<rect x="462" y="523" width="583" height="1" fill="#000" />
<rect x="28" y="586" width="371" height="1" fill="#000" />
<rect x="462" y="586" width="583" height="1" fill="#000" />
<rect x="28" y="670" width="371" height="1" fill="#000" />
<rect x="462" y="670" width="583" height="1" fill="#000" />
<rect x="28" y="754" width="371" height="1" fill="#000" />
<rect x="462" y="754" width="583" height="1" fill="#000" />
<rect x="28" y="775" width="371" height="1" fill="#000" />
<rect x="462" y="775" width="583" height="1" fill="#000" />
<rect x="28" y="817" width="371" height="1" fill="#000" />
<rect x="462" y="817" width="583" height="1" fill="#000" />
<rect x="295" y="235" width="1" height="592" fill="#000" />
<rect x="398" y="235" width="1" height="592" fill="#000" />
<rect x="462" y="235" width="1" height="592" fill="#000" />
<rect x="753" y="235" width="1" height="592" fill="#000" />
<rect x="1044" y="235" width="1" height="592" fill="#000" />
<rect x="1108" y="235" width="1" height="592" fill="#000" />
<rect x="1110" y="216" width="1" height="612" fill="#c6c6c6" />
<rect x="1108" y="235" width="2" height="1" fill="#000" />
<rect x="2" y="827" width="1109" height="1" fill="#ababab" />
<path d="M296 293h5.5l-5.5 6z" fill="#008600"/>
<path d="M296 335h5.5l-5.5 6z" fill="#008600"/>
<path d="M296 377h5.5l-5.5 6z" fill="#008600"/>
<path d="M296 398h5.5l-5.5 6z" fill="#008600"/>
<path d="M296 440h5.5l-5.5 6z" fill="#008600"/>
<path d="M296 524h5.5l-5.5 6z" fill="#008600"/>
<rect x="1108" y="235" width="2" height="1" fill="#000" />
<rect x="1108" y="292" width="2" height="1" fill="#000" />
<rect x="1108" y="334" width="2" height="1" fill="#000" />
<rect x="1108" y="376" width="2" height="1" fill="#000" />
<rect x="1108" y="397" width="2" height="1" fill="#000" />
<rect x="1108" y="439" width="2" height="1" fill="#000" />
<rect x="1108" y="523" width="2" height="1" fill="#000" />
<rect x="1108" y="586" width="2" height="1" fill="#000" />
<rect x="1108" y="670" width="2" height="1" fill="#000" />
<rect x="1108" y="754" width="2" height="1" fill="#000" />
<rect x="1108" y="775" width="2" height="1" fill="#000" />
<rect x="1108" y="817" width="2" height="1" fill="#000" />
<rect x="1109" y="293" width="1" height="5" fill="#008600" />
<rect x="1109" y="335" width="1" height="5" fill="#008600" />
<rect x="1109" y="377" width="1" height="5" fill="#008600" />
<rect x="1109" y="398" width="1" height="5" fill="#008600" />
<rect x="1109" y="440" width="1" height="5" fill="#008600" />
<rect x="1109" y="524" width="1" height="5" fill="#008600" />
<rect x="1109" y="587" width="1" height="5" fill="#008600" />
<rect x="1109" y="671" width="1" height="5" fill="#008600" />
<rect x="1109" y="755" width="1" height="5" fill="#008600" />
<rect x="1109" y="776" width="1" height="5" fill="#008600" />
<rect x="461" y="816" width="294" height="2" fill="#217346" />
<rect x="461" y="816" width="2" height="11" fill="#217346" />
<rect x="753" y="816" width="2" height="11" fill="#217346" />
<text x="30" y="231" font-family="Liberation Serif" font-size="14.67" fill="#000" font-weight="bold" textLength="109" lengthAdjust="spacingAndGlyphs" >Danh mục đơn vị</text>
<text x="464.5" y="231" font-family="Liberation Serif" font-size="14.67" fill="#000" font-weight="bold" textLength="206.8" lengthAdjust="spacingAndGlyphs" >Danh mục Lĩnh vực - Sự nghiệp</text>
<text x="161.6" y="270" font-family="Liberation Serif" font-size="15.5" fill="#000" font-weight="bold" textLength="70" lengthAdjust="spacingAndGlyphs" text-anchor="middle" >Tên đơn vị</text>
<text x="346.3" y="270" font-family="Liberation Serif" font-size="15.5" fill="#000" font-weight="bold" textLength="68.5" lengthAdjust="spacingAndGlyphs" text-anchor="middle" >Mã QHNS</text>
<text x="608.4" y="270" font-family="Liberation Serif" font-size="15.5" fill="#000" font-weight="bold" textLength="165.1" lengthAdjust="spacingAndGlyphs" text-anchor="middle" >Tên Lĩnh vực - Sự nghiệp</text>
<text x="898.75" y="270" font-family="Liberation Serif" font-size="15.5" fill="#000" font-weight="bold" textLength="101.3" lengthAdjust="spacingAndGlyphs" text-anchor="middle" >Thuộc Lĩnh vực</text>
<text x="29.3" y="319" font-family="Liberation Serif" font-size="15.6" fill="#000" font-weight="normal" textLength="134.24" lengthAdjust="spacingAndGlyphs" >UBND XÃ AN TÂN</text>
<text x="299" y="319" font-family="Liberation Serif" font-size="15.6" fill="#000" font-weight="normal" >1001802</text>
<text x="29.3" y="361" font-family="Liberation Serif" font-size="15.6" fill="#000" font-weight="normal" textLength="115.34" lengthAdjust="spacingAndGlyphs" >UBND xã An Hòa</text>
<text x="299" y="361" font-family="Liberation Serif" font-size="15.6" fill="#000" font-weight="normal" >1001803</text>
<text x="29.3" y="393" font-family="Liberation Serif" font-size="15.6" fill="#000" font-weight="normal" textLength="160.01" lengthAdjust="spacingAndGlyphs" >UBND XÃ AN QUANG</text>
<text x="299" y="393" font-family="Liberation Serif" font-size="15.6" fill="#000" font-weight="normal" >1001804</text>
<text x="29.3" y="424" font-family="Liberation Serif" font-size="15.6" fill="#000" font-weight="normal" textLength="141.26" lengthAdjust="spacingAndGlyphs" >UBND XÃ AN VINH</text>
<text x="299" y="424" font-family="Liberation Serif" font-size="15.6" fill="#000" font-weight="normal" >1003636</text>
<text x="29.3" y="487" font-family="Liberation Serif" font-size="15.6" fill="#000" font-weight="normal" textLength="128.38" lengthAdjust="spacingAndGlyphs" >UBND Xã An Trung</text>
<text x="299" y="487" font-family="Liberation Serif" font-size="15.6" fill="#000" font-weight="normal" >1016749</text>
<text x="29.3" y="561" font-family="Liberation Serif" font-size="15.6" fill="#000" font-weight="normal" textLength="125.73" lengthAdjust="spacingAndGlyphs" >UBND xã An Nghĩa</text>
<text x="299" y="561" font-family="Liberation Serif" font-size="15.6" fill="#000" font-weight="normal" >1066358</text>
<text x="464.3" y="319" font-family="Liberation Serif" font-size="14.4" fill="#000" font-weight="normal" textLength="123.7" lengthAdjust="spacingAndGlyphs" >Sự nghiệp giao thông</text>
<text x="464.3" y="353" font-family="Liberation Serif" font-size="14.4" fill="#000" font-weight="normal" textLength="256.91" lengthAdjust="spacingAndGlyphs" >Sự nghiệp nông nghiệp, lâm nghiệp, thủy lợi,</text>
<text x="464.3" y="371" font-family="Liberation Serif" font-size="14.4" fill="#000" font-weight="normal" textLength="50.96" lengthAdjust="spacingAndGlyphs" >thủy sản</text>
<text x="464.3" y="392" font-family="Liberation Serif" font-size="14.4" fill="#000" font-weight="normal" textLength="134.3" lengthAdjust="spacingAndGlyphs" >Sự nghiệp kinh tế khác</text>
<text x="464.3" y="424" font-family="Liberation Serif" font-size="14.4" fill="#000" font-weight="normal" textLength="170.39" lengthAdjust="spacingAndGlyphs" >Sự nghiệp bảo vệ môi trường</text>
<text x="464.3" y="487" font-family="Liberation Serif" font-size="14.4" fill="#000" font-weight="normal" textLength="111.68" lengthAdjust="spacingAndGlyphs" >Sự nghiệp giáo dục</text>
<text x="464.3" y="560" font-family="Liberation Serif" font-size="14.4" fill="#000" font-weight="normal" textLength="182.71" lengthAdjust="spacingAndGlyphs" >Sự nghiệp đào tạo và dạy nghề</text>
<text x="464.3" y="625" font-family="Liberation Serif" font-size="14.4" fill="#000" font-weight="normal" textLength="250.62" lengthAdjust="spacingAndGlyphs" >Nhiệm vụ giáo dục, đào tạo, giáo dục nghề</text>
<text x="464.3" y="643" font-family="Liberation Serif" font-size="14.4" fill="#000" font-weight="normal" textLength="71.01" lengthAdjust="spacingAndGlyphs" >nghiệp khác</text>
<text x="464.3" y="718" font-family="Liberation Serif" font-size="14.4" fill="#000" font-weight="normal" textLength="198.49" lengthAdjust="spacingAndGlyphs" >Sự nghiệp khoa học và công nghệ</text>
<text x="464.3" y="770" font-family="Liberation Serif" font-size="14.4" fill="#000" font-weight="normal" textLength="163.9" lengthAdjust="spacingAndGlyphs" >Sự nghiệp văn hóa thông tin</text>
<text x="464.3" y="802" font-family="Liberation Serif" font-size="14.4" fill="#000" font-weight="normal" textLength="259.18" lengthAdjust="spacingAndGlyphs" >Sự nghiệp phát thanh, truyền hình, thông tấn</text>
<text x="755.2" y="319" font-family="Liberation Serif" font-size="14.4" fill="#000" font-weight="normal" textLength="128.57" lengthAdjust="spacingAndGlyphs" >Các hoạt động kinh tế</text>
<text x="755.2" y="361" font-family="Liberation Serif" font-size="14.4" fill="#000" font-weight="normal" textLength="128.57" lengthAdjust="spacingAndGlyphs" >Các hoạt động kinh tế</text>
<text x="755.2" y="392" font-family="Liberation Serif" font-size="14.4" fill="#000" font-weight="normal" textLength="128.57" lengthAdjust="spacingAndGlyphs" >Các hoạt động kinh tế</text>
<text x="755.2" y="424" font-family="Liberation Serif" font-size="14.4" fill="#000" font-weight="normal" textLength="170.89" lengthAdjust="spacingAndGlyphs" >Sự nghiệp bảo vệ môi trường</text>
<text x="755.2" y="487" font-family="Liberation Serif" font-size="14.4" fill="#000" font-weight="normal" textLength="245.19" lengthAdjust="spacingAndGlyphs" >Sự nghiệp giáo dục - đào tạo và dạy nghề</text>
<text x="755.2" y="560" font-family="Liberation Serif" font-size="14.4" fill="#000" font-weight="normal" textLength="245.19" lengthAdjust="spacingAndGlyphs" >Sự nghiệp giáo dục - đào tạo và dạy nghề</text>
<text x="755.2" y="634" font-family="Liberation Serif" font-size="14.4" fill="#000" font-weight="normal" textLength="245.19" lengthAdjust="spacingAndGlyphs" >Sự nghiệp giáo dục - đào tạo và dạy nghề</text>
<text x="755.2" y="718" font-family="Liberation Serif" font-size="14.4" fill="#000" font-weight="normal" textLength="197.68" lengthAdjust="spacingAndGlyphs" >Sự nghiệp khoa học và công nghệ</text>
<text x="755.2" y="770" font-family="Liberation Serif" font-size="14.4" fill="#000" font-weight="normal" textLength="163.8" lengthAdjust="spacingAndGlyphs" >Sự nghiệp văn hóa thông tin</text>
<text x="755.2" y="802" font-family="Liberation Serif" font-size="14.4" fill="#000" font-weight="normal" textLength="259.08" lengthAdjust="spacingAndGlyphs" >Sự nghiệp phát thanh, truyền hình, thông tấn</text>
<rect x="1111" y="196" width="18" height="632" fill="#e6e6e6" />
<rect x="1114" y="213" width="15" height="600" fill="#dadada" />
<rect x="1114" y="198" width="15" height="15" fill="#fff" />
<rect x="1114" y="198" width="15" height="1" fill="#ababab" />
<rect x="1114" y="212" width="15" height="1" fill="#ababab" />
<rect x="1114" y="198" width="1" height="15" fill="#ababab" />
<rect x="1128" y="198" width="1" height="15" fill="#ababab" />
<path d="M1117.5 206.5h7l-3.5-3.5z" fill="#6a6a6a"/>
<rect x="1114" y="213" width="15" height="17" fill="#fff" />
<rect x="1114" y="213" width="15" height="1" fill="#ababab" />
<rect x="1114" y="229" width="15" height="1" fill="#ababab" />
<rect x="1114" y="213" width="1" height="17" fill="#ababab" />
<rect x="1128" y="213" width="1" height="17" fill="#ababab" />
<rect x="1114" y="813" width="15" height="15" fill="#fff" />
<rect x="1114" y="813" width="15" height="1" fill="#ababab" />
<rect x="1114" y="827" width="15" height="1" fill="#ababab" />
<rect x="1114" y="813" width="1" height="15" fill="#ababab" />
<rect x="1128" y="813" width="1" height="15" fill="#ababab" />
<path d="M1117.5 818.5h7l-3.5 3.5z" fill="#6a6a6a"/>
<rect x="2" y="828" width="1127" height="27" fill="#e6e6e6" />
<rect x="2" y="855" width="1127" height="1" fill="#c6c6c6" />
<path d="M29 840.5l4-3.5v7z" fill="#217346"/>
<path d="M62 840.5l-4-3.5v7z" fill="#c0c0c0"/>
<rect x="83" y="843" width="2" height="2" fill="#217346" />
<rect x="87" y="843" width="2" height="2" fill="#217346" />
<rect x="91" y="843" width="2" height="2" fill="#217346" />
<rect x="102" y="831" width="1" height="21" fill="#a0a0a0" />
<text x="120" y="845" font-family="Liberation Sans" font-size="13" fill="#444" font-weight="normal" textLength="173" lengthAdjust="spacingAndGlyphs" >Nhập khẩu theo CTMT, Dự án</text>
<rect x="311" y="828" width="1" height="25" fill="#ababab" />
<rect x="312" y="828" width="85" height="24" fill="#fff" />
<rect x="397" y="828" width="1" height="25" fill="#ababab" />
<rect x="311" y="850" width="87" height="2" fill="#217346" />
<text x="324" y="845" font-family="Liberation Sans" font-size="13" fill="#217346" font-weight="bold" textLength="62" lengthAdjust="spacingAndGlyphs" >Danh mục</text>
<circle cx="439" cy="841" r="7.5" stroke="#777" stroke-width="1" fill="none"/><path d="M435 841h8 M439 837v8" stroke="#777" stroke-width="1.6"/>
<rect x="680" y="837" width="2" height="2" fill="#a0a0a0" />
<rect x="680" y="841" width="2" height="2" fill="#a0a0a0" />
<rect x="680" y="845" width="2" height="2" fill="#a0a0a0" />
<rect x="697" y="834" width="414" height="15" fill="#dadada" />
<rect x="697" y="834" width="15" height="15" fill="#fff" />
<rect x="697" y="834" width="15" height="1" fill="#ababab" />
<rect x="697" y="848" width="15" height="1" fill="#ababab" />
<rect x="697" y="834" width="1" height="15" fill="#ababab" />
<rect x="711" y="834" width="1" height="15" fill="#ababab" />
<path d="M706 837.5v7l-3.5-3.5z" fill="#6a6a6a"/>
<rect x="712" y="834" width="153" height="15" fill="#fff" />
<rect x="712" y="834" width="153" height="1" fill="#ababab" />
<rect x="712" y="848" width="153" height="1" fill="#ababab" />
<rect x="712" y="834" width="1" height="15" fill="#ababab" />
<rect x="864" y="834" width="1" height="15" fill="#ababab" />
<rect x="1096" y="834" width="15" height="15" fill="#fff" />
<rect x="1096" y="834" width="15" height="1" fill="#ababab" />
<rect x="1096" y="848" width="15" height="1" fill="#ababab" />
<rect x="1096" y="834" width="1" height="15" fill="#ababab" />
<rect x="1110" y="834" width="1" height="15" fill="#ababab" />
<path d="M1101.5 837.5v7l3.5-3.5z" fill="#6a6a6a"/>
<rect x="2" y="856" width="1127" height="16" fill="#f0f0f0" />
<text x="9.5" y="870" font-family="Liberation Sans" font-size="11.5" fill="#444" font-weight="normal" textLength="30.5" lengthAdjust="spacingAndGlyphs" >Ready</text>
<rect x="840" y="856" width="38" height="16" fill="#c6c6c6" />
<path d="M852.5 859.5h12v12h-12z M856.5 859.5v12 M860.5 859.5v12 M852.5 863.5h12 M852.5 867.5h12" stroke="#6a6a6a" fill="none"/>
<path d="M890.5 859.5h13v12h-13z" stroke="#6a6a6a" fill="none"/><path d="M893.5 862.5h7v6h-7z M895 864.5h4 M895 866.5h4" stroke="#6a6a6a" fill="none"/>
<path d="M928.5 871.5v-12h13v12 M928.5 866.5h13 M933.5 859.5v7 M937.5 859.5v4" stroke="#6a6a6a" fill="none"/>
<rect x="959" y="864.5" width="6" height="2" fill="#555" />
<rect x="969" y="865" width="99" height="1" fill="#9a9a9a" />
<rect x="1017" y="860" width="4" height="11" fill="#666" />
<path d="M1073 865.5h8 M1077 861.5v8" stroke="#555" stroke-width="1.8"/>
<text x="1097" y="870" font-family="Liberation Sans" font-size="12" fill="#444" font-weight="normal" textLength="25.5" lengthAdjust="spacingAndGlyphs" >100%</text>
<path d="M996.5 387.5V375.8a1.6 1.6 0 0 1 3.2 0V380.8a1.5 1.5 0 0 1 3 0.3a1.5 1.5 0 0 1 3 0.5a1.5 1.5 0 0 1 3 1V391c0 3.5-2.5 6-5.5 6h-2.5c-2 0-3.5-1-4.5-2.5l-3.5-5.3c-0.8-1.3 0.3-2.8 1.8-2.3z" fill="#fff" stroke="#141424" stroke-width="1"/><path d="M999.7 381v4.5 M1002.7 381.3v4.3 M1005.7 382v3.6" stroke="#141424" stroke-width="0.9"/>
</svg></body></html>
